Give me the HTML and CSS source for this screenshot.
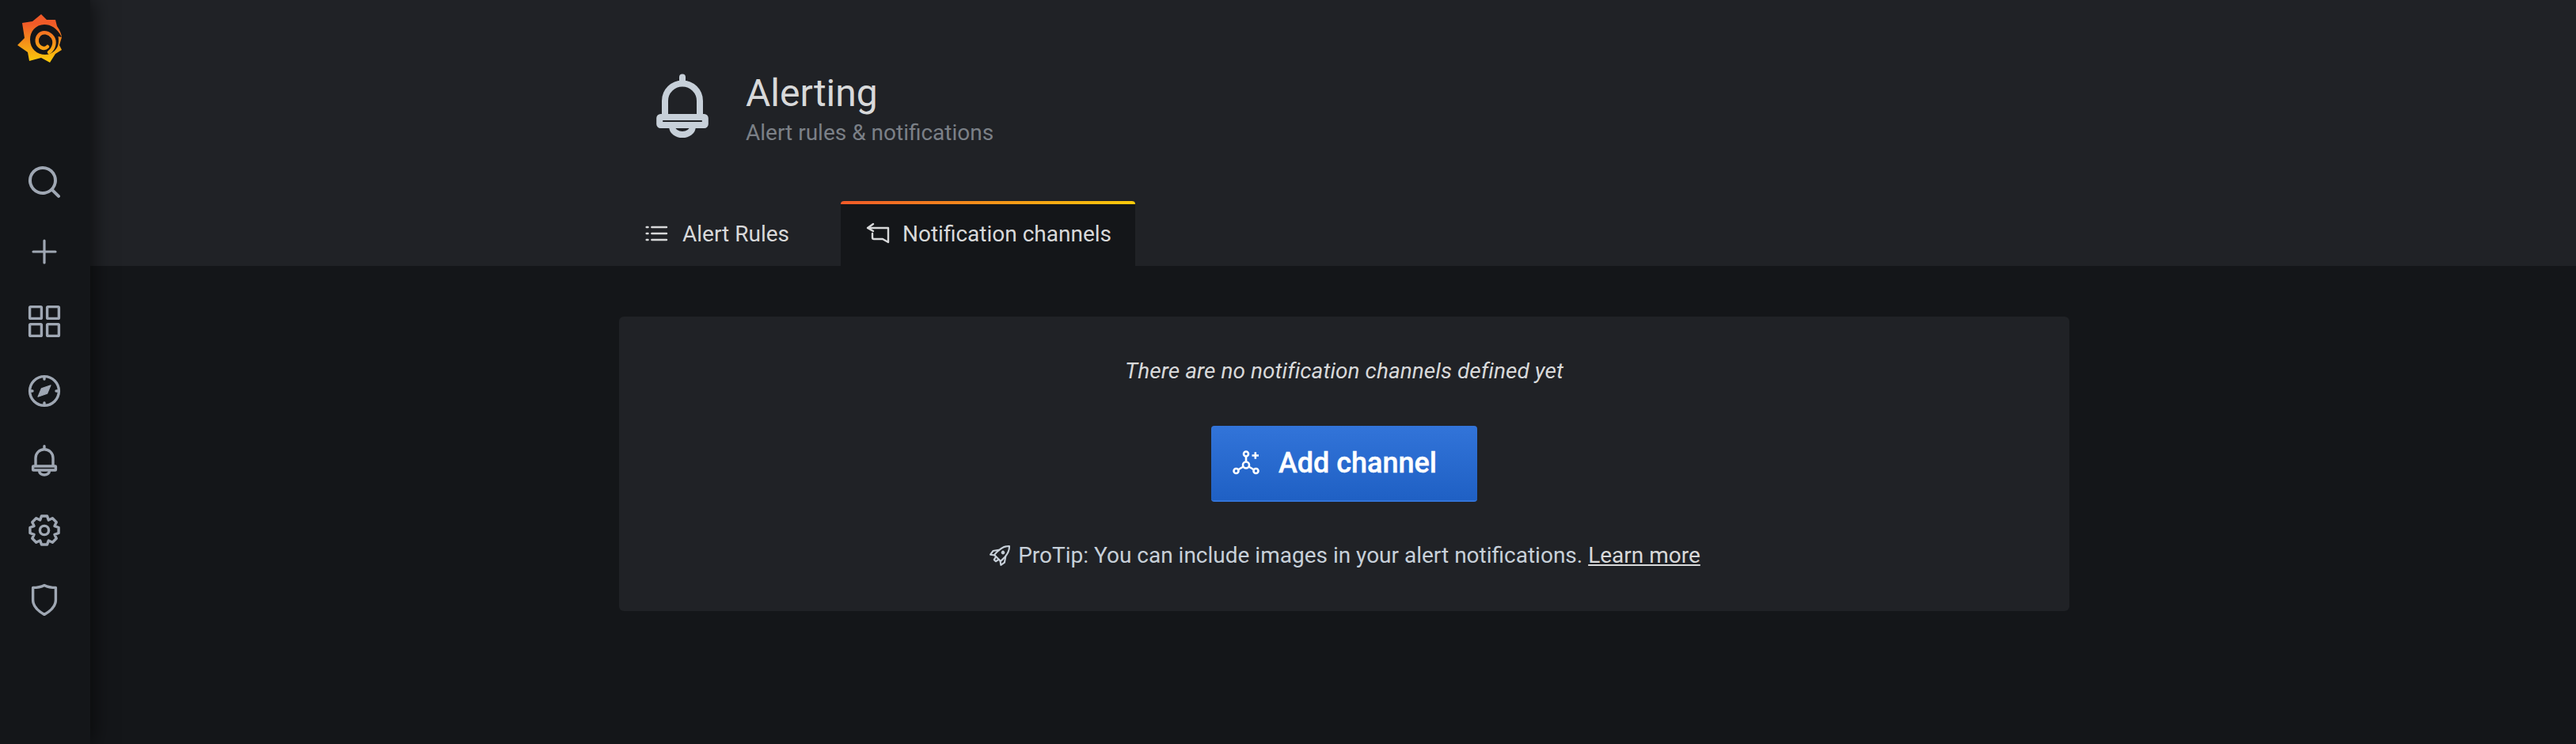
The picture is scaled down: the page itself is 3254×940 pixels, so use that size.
FILE: index.html
```html
<!DOCTYPE html>
<html lang="en">
<head>
<meta charset="utf-8">
<title>Alerting</title>
<link rel="stylesheet" href="styles.css">
</head>
<body>
<nav class="sidebar">
  <div class="logo">
    <svg width="114" height="96" viewBox="0 0 114 96">
      <defs><linearGradient id="sun" gradientUnits="userSpaceOnUse" x1="0" y1="30" x2="0" y2="78"><stop offset="0" stop-color="#f05a28"/><stop offset="1" stop-color="#fbca0a"/></linearGradient></defs>
      <path fill="url(#sun)" d="M52 18 L59 25 L70 25 L72 33 Q77 40 78 47 L75 57 L78 63 L70 68 L63 79 L52 73 L37 77 L35 66 L22 57 L31 48 L28 29 L41 27 Z"/>
      <path fill="#141619" d="M78 47 C72 35 64 31 56 31 C45 31 38 40 38 50 C38 62 47 69 57 69 C66 69 74 62 74 52 C74 50 74 48 73.500 46 L78 47 Z"/>
      <path fill="none" stroke="url(#sun)" stroke-width="4.500" stroke-linecap="round" d="M62 66 C69 61 70 52 66.500 47 C62 41 54 39 49.500 44 C45 49 46 57 52 60 C55 61.500 58 61 60 59"/>
    </svg>
  </div>
  <a class="nav-item"><svg class="ico-48" viewBox="0 0 24 24"><path class="fill" d="M21.71,20.29,18,16.61A9,9,0,1,0,16.61,18l3.68,3.68a1,1,0,0,0,1.42,0A1,1,0,0,0,21.71,20.29ZM11,18a7,7,0,1,1,7-7A7,7,0,0,1,11,18Z"/></svg></a>
  <a class="nav-item"><svg class="ico-48" viewBox="0 0 24 24"><path class="fill" d="M19,11.2H12.800V5a.8.8,0,0,0-1.600,0v6.200H5a.8.800,0,0,0,0,1.600h6.200V19a.8.8,0,0,0,1.600,0V12.800H19a.8.800,0,0,0,0-1.600Z"/></svg></a>
  <a class="nav-item"><svg class="ico-48 line" viewBox="0 0 24 24"><rect x="2.800" y="2.800" width="7.400" height="7.400" rx=".5"/><rect x="13.800" y="2.800" width="7.400" height="7.400" rx=".5"/><rect x="2.800" y="13.800" width="7.400" height="7.400" rx=".5"/><rect x="13.800" y="13.800" width="7.400" height="7.400" rx=".5"/></svg></a>
  <a class="nav-item"><svg class="ico-48 line" viewBox="0 0 24 24"><circle cx="12" cy="12" r="9.200"/><path d="M12 3v1.500M12 19.500V21M3 12h1.500M19.500 12H21"/><path class="fill" d="M16 8.400 L13.800 13.600 L8 15.600 L10.200 10.400 Z"/></svg></a>
  <a class="nav-item"><svg class="ico-48 line" viewBox="0 0 24 24"><path d="M12 2.850V4.800M6.500 15V10.350a5.500 5.500 0 0 1 11 0V15M8.800 18.600a3.200 2.400 0 0 0 6.400 0"/><rect x="4.800" y="15.500" width="14.400" height="2.500" rx=".3"/></svg></a>
  <a class="nav-item"><svg class="ico-48 line" viewBox="0 0 24 24"><path d="M10.245 2.969 13.755 2.969 14.679 5.533 17.145 4.373 19.627 6.855 18.467 9.321 21.031 10.245 21.031 13.755 18.467 14.679 19.627 17.145 17.145 19.627 14.679 18.467 13.755 21.031 10.245 21.031 9.321 18.467 6.855 19.627 4.373 17.145 5.533 14.679 2.969 13.755 2.969 10.245 5.533 9.321 4.373 6.855 6.855 4.373 9.321 5.533Z"/><circle cx="12" cy="12" r="2.800"/></svg></a>
  <a class="nav-item"><svg class="ico-48 line" viewBox="0 0 24 24"><path d="M4.800 4.200C7.500 4.200 10 3.700 12 2.700 14 3.700 16.500 4.200 19.200 4.200V12C19.200 16 16 19 12 21.200 8 19 4.800 16 4.800 12Z"/></svg></a>
</nav>
<main class="main">
  <header class="page-header">
    <div class="container">
      <div class="title-row">
        <svg class="title-icon line" viewBox="0 0 24 24"><path d="M12 2.850V4.800M6.500 15V10.350a5.500 5.500 0 0 1 11 0V15M8.800 18.600a3.200 2.400 0 0 0 6.400 0"/><rect x="4.800" y="15.500" width="14.400" height="2.500" rx=".3"/></svg>
        <div class="title-text">
          <h1 class="title">Alerting</h1>
          <div class="subtitle">Alert rules &amp; notifications</div>
        </div>
      </div>
      <div class="tabs">
        <a class="tab">
          <svg class="tab-icon line" viewBox="0 0 24 24"><path d="M7 6H21M7 12H21M7 18H21M2 6h1.400M2 12h1.400M2 18h1.400"/></svg>
          <span>Alert Rules</span>
        </a>
        <a class="tab active">
          <svg class="tab-icon px" viewBox="0 0 32 32"><path d="M11 4 4 9 11 13M4 9H30V27L23 23H12Q10 23 10 21V16"/></svg>
          <span>Notification channels</span>
        </a>
      </div>
    </div>
  </header>
  <section class="content">
    <div class="card">
      <p class="empty">There are no notification channels defined yet</p>
      <a class="btn">
        <svg class="btn-icon" viewBox="0 0 34 34"><g fill="none" stroke="#fff" stroke-width="2.600"><circle cx="17" cy="5.500" r="3"/><circle cx="17" cy="19.500" r="4"/><circle cx="4.500" cy="27" r="3"/><circle cx="29.500" cy="27" r="3"/><path d="M17 8.500V15.500M13.600 21.500 7 25.500M20.400 21.500 27 25.500M24.500 7.500H33M28.800 3.300V11.800"/></g></svg>
        <span>Add channel</span>
      </a>
      <p class="tip">
        <svg class="tip-icon line" viewBox="0 0 24 24"><g transform="rotate(45 12 12)"><path d="M12 -1.500C16 2 17.300 7 16.500 15.500H7.500C6.700 7 8 2 12 -1.500Z"/><path d="M7.300 8.500 3.800 13.500 4.500 18 8 15.500M16.700 8.500 20.200 13.500 19.500 18 16 15.500M10 15.500 10.800 19H13.200L14 15.500"/><circle cx="12" cy="7.500" r="1"/></g></svg>
        <span>ProTip: You can include images in your alert notifications. <a class="link">Learn more</a></span>
      </p>
    </div>
  </section>
</main>
</body>
</html>
```
FILE: styles.css
```css
* { box-sizing: border-box; }
html, body { height: 100%; }
body {
  margin: 0;
  display: flex;
  min-height: 940px;
  overflow: hidden;
  background: #141619;
  color: #c7d0d9;
  font-family: Roboto, "Liberation Sans", sans-serif;
}
.sidebar {
  position: relative;
  z-index: 2;
  flex: 0 0 114px;
  display: flex;
  flex-direction: column;
  background: #141619;
  box-shadow: 4px 0 24px rgba(0, 0, 0, .55);
}
.logo { height: 186px; }
.logo svg { display: block; }
.nav-item {
  height: 88px;
  padding-right: 2px;
  display: flex;
  align-items: center;
  justify-content: center;
}
.ico-48 { width: 48px; height: 48px; }
.fill { fill: #9fa7b3; stroke: none; }
.sidebar .line { fill: none; stroke: #9fa7b3; stroke-width: 1.700; stroke-linejoin: round; stroke-linecap: round; }
.sidebar .line .fill { fill: #9fa7b3; stroke: #9fa7b3; stroke-width: .6; }
.main { flex: 1; min-width: 0; }
.page-header { height: 336px; background: #202226; }
.container { margin-left: 668px; width: 1832px; }
.title-row {
  height: 254px;
  padding: 86px 0 0 32px;
  display: flex;
  align-items: flex-start;
}
.title-icon {
  width: 96px;
  height: 96px;
  margin-right: 32px;
  fill: none;
  stroke: #c7d0d9;
  stroke-width: 2;
  stroke-linecap: round;
  stroke-linejoin: round;
}
.title-text { margin-top: 4px; }
.title {
  margin: 0;
  font-size: 48px;
  line-height: 56px;
  font-weight: 400;
  color: #d8d9da;
}
.subtitle { margin-top: 5px; font-size: 28px; line-height: 34px; color: #7b8087; }
.tabs { display: flex; height: 82px; gap: 35px; padding-left: 2px; }
.tab {
  display: flex;
  align-items: center;
  gap: 16px;
  padding: 0 30px;
  font-size: 28px;
  color: #d8d9da;
  border-radius: 4px 4px 0 0;
}
.tab.active {
  background: linear-gradient(#141619, #141619) padding-box,
              linear-gradient(90deg, #f05a28, #fbca0a) border-box;
  border-top: 4px solid transparent;
  padding-bottom: 4px;
}
.tab-icon {
  width: 32px;
  height: 32px;
  fill: none;
  stroke: #d8d9da;
  stroke-width: 1.800;
  stroke-linecap: round;
  stroke-linejoin: round;
}
.tab-icon.px { stroke-width: 2.400; }
.content { padding: 64px 0 0 668px; }
.card {
  width: 1832px;
  height: 372px;
  background: #202226;
  border-radius: 6px;
  display: flex;
  flex-direction: column;
  align-items: center;
}
.empty {
  margin: 52px 0 0;
  font-size: 28px;
  line-height: 34px;
  font-style: italic;
  letter-spacing: .06px;
  color: #d8d9da;
}
.btn {
  margin-top: 52px;
  width: 336px;
  height: 96px;
  padding-right: 24px;
  display: flex;
  align-items: center;
  justify-content: center;
  gap: 24px;
  color: #fff;
  font-size: 36px;
  font-weight: 500;
  -webkit-text-stroke: .4px #fff;
  background: linear-gradient(#3274d9, #1f60c4);
  border-radius: 4px;
  border-bottom: 2px solid #3274d9;
}
.btn-icon { width: 34px; height: 34px; }
.tip {
  margin: 50px 0 0;
  display: flex;
  align-items: center;
  gap: 8px;
  font-size: 28px;
  line-height: 36px;
}
.tip-icon {
  width: 30px;
  height: 30px;
  fill: none;
  stroke: #c7d0d9;
  stroke-width: 1.700;
  stroke-linejoin: round;
  stroke-linecap: round;
}
.link { color: #d8d9da; text-decoration: underline; }
```
